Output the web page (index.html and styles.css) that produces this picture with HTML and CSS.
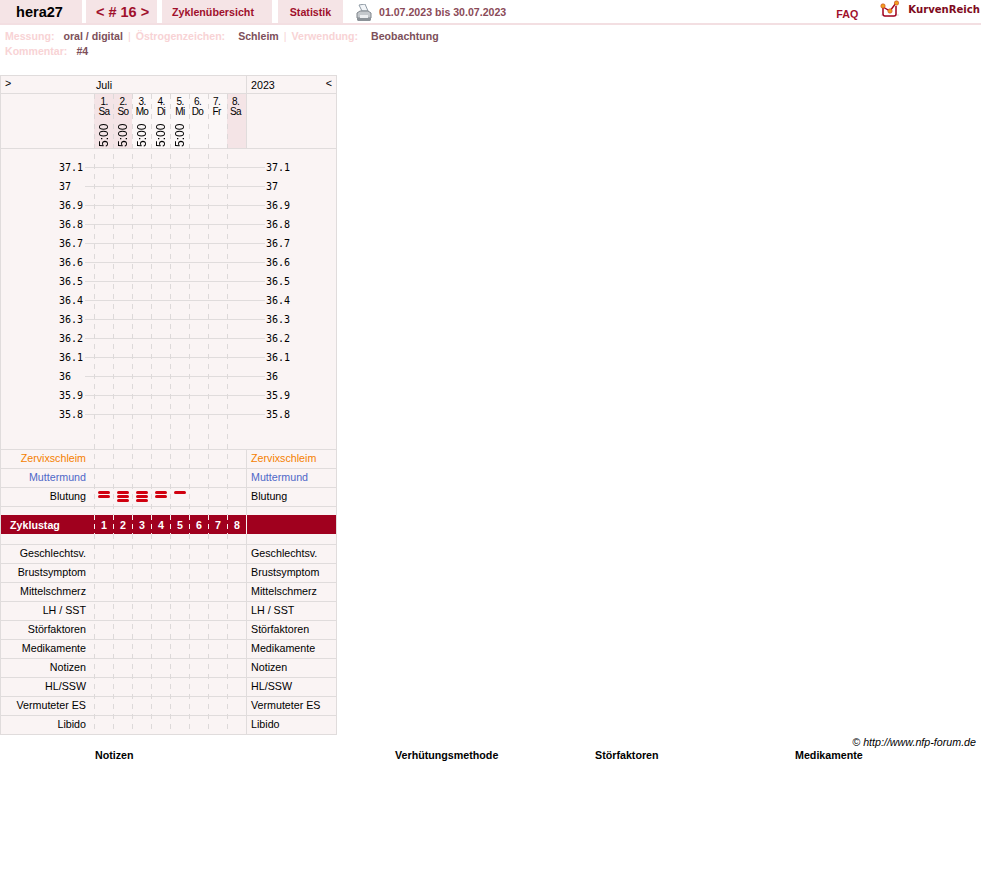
FILE: index.html
```html
<!DOCTYPE html>
<html lang="de">
<head>
    <meta charset="UTF-8">
    <title>Zyklus 16</title>
    <link rel="stylesheet" href="styles.css">
</head>
<body>

<header class="topbar">
    <div class="tab tab-user">hera27</div>
    <div class="tab tab-cycle">&lt; # 16 &gt;</div>
    <div class="tab tab-overview">Zyklenübersicht</div>
    <div class="tab tab-stats">Statistik</div>
    <svg class="printer" width="16" height="18" viewBox="0 0 16 18">
        <path d="M3 1l6-1 3 7H6z" fill="#f2f5f8" stroke="#8f9aa4" stroke-width="1"/>
        <path d="M1 9l3-2h8l3 2v5H1z" fill="#c4c8cc" stroke="#80868c" stroke-width="1"/>
        <path d="M1 14h14v2l-1 1H2l-1-1z" fill="#8c9298"/>
        <path d="M4 11h8v3H4z" fill="#eceef0"/>
    </svg>
    <div class="dates">01.07.2023 bis 30.07.2023</div>
    <div class="faq">FAQ</div>
    <svg class="logo" width="20" height="18" viewBox="0 0 20 18">
        <path d="M1 15h18M5 17v-2M9 17v-2M13 17v-2" fill="none" stroke="#d8d8d8" stroke-width="1"/>
        <path d="M3 7v7q0 2 2 2h9q2 0 2-2V6" fill="#fff" stroke="#a0001e" stroke-width="1.5"/>
        <path d="M3 7l7 4 6-8" fill="none" stroke="#a0001e" stroke-width="1.4"/>
        <circle cx="3" cy="6" r="2.2" fill="#f0a020" stroke="#c8401c" stroke-width="0.6"/>
        <circle cx="10" cy="11" r="2.2" fill="#f0a020" stroke="#c8401c" stroke-width="0.6"/>
        <circle cx="16.500" cy="3" r="2.2" fill="#f0a020" stroke="#c8401c" stroke-width="0.6"/>
    </svg>
    <div class="brand">KurvenReich</div>
</header>

<div class="meta">
    <div class="meta-line">
        <span class="key">Messung:</span><span class="val">oral / digital</span><span class="sep">|</span>
        <span class="key key-wide">Östrogenzeichen:</span><span class="val">Schleim</span><span class="sep">|</span>
        <span class="key key-wide">Verwendung:</span><span class="val">Beobachtung</span>
    </div>
    <div class="meta-line">
        <span class="key">Kommentar:</span><span class="val">#4</span>
    </div>
</div>

<div class="chart" id="chart"></div>

<div class="copyright">© http://www.nfp-forum.de</div>

<div class="notes">
    <div class="note-col note-wide">Notizen</div>
    <div class="note-col">Verhütungsmethode</div>
    <div class="note-col">Störfaktoren</div>
    <div class="note-col">Medikamente</div>
</div>

<script>
    const days = [
        ['1.', 'Sa', '5:00'], ['2.', 'So', '5:00'], ['3.', 'Mo', '5:00'], ['4.', 'Di', '5:00'],
        ['5.', 'Mi', '5:00'], ['6.', 'Do', ''], ['7.', 'Fr', ''], ['8.', 'Sa', '']
    ];
    const temps = ['37.1', '37', '36.9', '36.8', '36.7', '36.6', '36.5', '36.4', '36.3', '36.2', '36.1', '36', '35.9', '35.8'];
    const bleeding = [2, 3, 3, 2, 1, 0, 0, 0];
    const lower = ['Geschlechtsv.', 'Brustsymptom', 'Mittelschmerz', 'LH / SST', 'Störfaktoren', 'Medikamente', 'Notizen', 'HL/SSW', 'Vermuteter ES', 'Libido'];

    function labelRow(name, cls, inner) {
        return `<div class="row ${cls}">
            <div class="left">${name}</div>
            <div class="days">${inner || ''}</div>
            <div class="right">${name}</div>
        </div>`;
    }

    let html = '<div class="grid-lines"></div>';

    html += `<div class="row head-row">
        <div class="left head-left"><span>&gt;</span></div>
        <div class="days">Juli</div>
        <div class="right head-right"><span>2023</span><span>&lt;</span></div>
    </div>`;

    html += '<div class="row day-row"><div class="left"></div><div class="days">';
    days.forEach(d => {
        const weekend = d[1] === 'Sa' || d[1] === 'So' ? ' weekend' : '';
        html += `<div class="day${weekend}"><div class="day-name">${d[0]}<br>${d[1]}</div><div class="day-time">${d[2]}</div></div>`;
    });
    html += '</div><div class="right"></div></div>';

    html += '<div class="temps">';
    temps.forEach(t => {
        html += `<div class="temp-row"><div class="temp-left">${t}</div><div class="temp-right">${t}</div></div>`;
    });
    html += '</div>';

    html += labelRow('Zervixschleim', 'orange');
    html += labelRow('Muttermund', 'blue');

    let marks = '';
    bleeding.forEach(n => {
        marks += '<div class="mark">' + '<i></i>'.repeat(n) + '</div>';
    });
    html += labelRow('Blutung', '', marks);

    html += '<div class="row spacer-a"><div class="left"></div><div class="days"></div><div class="right"></div></div>';

    let nums = '';
    days.forEach((d, i) => { nums += `<div class="num">${i + 1}</div>`; });
    html += `<div class="row red-row"><div class="left">Zyklustag</div><div class="days">${nums}</div><div class="right"></div></div>`;

    html += '<div class="row spacer-b"><div class="left"></div><div class="days"></div><div class="right"></div></div>';

    lower.forEach(name => { html += labelRow(name, ''); });

    document.getElementById('chart').innerHTML = html;
</script>

</body>
</html>
```

FILE: styles.css
```css
body {
    font-family: "Liberation Sans", Arial, sans-serif;
    font-size: 10.7px;
    margin: 0;
    background-color: #fff;
    color: #000;
}
.topbar {
    display: flex;
    align-items: center;
    height: 23px;
    border-bottom: 2px solid #f3dfe2;
}
.tab {
    height: 23px;
    line-height: 24px;
    background-color: #f5e4e6;
    color: #a0102c;
    font-weight: bold;
    text-align: center;
    box-sizing: border-box;
}
.tab-user {
    width: 82px;
    margin-right: 4px;
    padding-right: 3px;
    color: #000;
    font-size: 14.5px;
}
.tab-cycle {
    width: 71px;
    margin-right: 5px;
    padding-left: 2px;
    font-size: 14.5px;
}
.tab-overview {
    width: 110px;
    margin-right: 6px;
    text-align: left;
    padding-left: 10px;
}
.tab-stats {
    width: 65px;
    margin-right: 13px;
}
.printer {
    flex: none;
    margin-right: 7px;
    margin-top: 2px;
}
.dates {
    color: #8a4a58;
    font-weight: bold;
    font-size: 10.6px;
}
.faq {
    margin-left: auto;
    margin-top: 5px;
    margin-right: 22px;
    color: #a0102c;
    font-weight: bold;
}
.logo {
    flex: none;
    margin-right: 8px;
    margin-top: -5px;
}
.brand {
    font-family: "DejaVu Sans", sans-serif;
    font-weight: bold;
    font-size: 10.1px;
    color: #7e0a20;
    margin-right: 1px;
    margin-top: -4px;
}
.meta {
    padding: 4px 5px 0;
    font-size: 10.6px;
    font-weight: bold;
    line-height: 15px;
    height: 46px;
}
.meta-line {
    display: flex;
    white-space: pre;
}
.key {
    color: #f8d3d5;
    margin-right: 9px;
}
.key-wide {
    margin-right: 13px;
}
.val {
    color: #7d4f5a;
}
.sep {
    color: #f8d3d5;
    font-weight: normal;
    margin: 0 5px;
}
.chart {
    position: relative;
    width: 337px;
    height: 660px;
    box-sizing: border-box;
    border: 1px solid #e0dcdc;
    background-color: #faf4f4;
}
.grid-lines {
    position: absolute;
    left: 93px;
    top: 18px;
    bottom: 0;
    width: 134px;
    background-image: repeating-linear-gradient(to bottom, #ddd9d9 0 5px, transparent 5px 10px);
    mask-image: repeating-linear-gradient(to right, #000 0 1px, transparent 1px 19px);
    z-index: 1;
}
.row {
    display: flex;
    height: 19px;
    line-height: 17px;
    box-sizing: border-box;
    border-bottom: 1px solid #e0dcdc;
}
.left {
    width: 93px;
    box-sizing: border-box;
    padding-right: 8px;
    text-align: right;
    flex: none;
}
.days {
    display: flex;
    width: 152px;
    flex: none;
}
.right {
    flex: 1;
    box-sizing: border-box;
    border-left: 1px solid #e0dcdc;
    padding-left: 4px;
}
.head-row {
    height: 18px;
    line-height: 18px;
}
.head-left {
    text-align: left;
    padding-left: 4px;
    line-height: 15px;
}
.head-row .days {
    padding-left: 2px;
    box-sizing: border-box;
}
.head-right {
    display: flex;
    justify-content: space-between;
    padding-right: 4px;
}
.head-right span:last-child {
    line-height: 15px;
}
.day-row {
    height: 55px;
    line-height: 10px;
}
.day {
    width: 19px;
    text-align: center;
    font-size: 10px;
    letter-spacing: -0.6px;
    padding-top: 3px;
    box-sizing: border-box;
    background-color: #fbf7f7;
}
.day:nth-child(-n+5) {
    padding-left: 1px;
}
.day:nth-child(n+6) {
    padding-right: 2px;
}
.day.weekend {
    background-color: #f4e4e6;
}
.day-name {
    height: 25px;
}
.day-time {
    writing-mode: vertical-rl;
    transform: rotate(180deg);
    height: 26px;
    width: 19px;
    line-height: 19px;
    font-size: 12px;
    letter-spacing: 0;
}
.temps {
    height: 301px;
    box-sizing: border-box;
    padding-top: 9px;
    border-bottom: 1px solid #e0dcdc;
    font-family: "DejaVu Sans Mono", monospace;
    font-size: 10px;
}
.temp-row {
    position: relative;
    display: flex;
    height: 19px;
    line-height: 19px;
}
.temp-row::after {
    content: "";
    position: absolute;
    left: 84px;
    width: 180px;
    top: 9px;
    height: 1px;
    background-color: #e0dcdc;
}
.temp-left {
    flex: none;
    width: 265px;
    box-sizing: border-box;
    padding-left: 58px;
}
.orange {
    color: #f57f00;
}
.blue {
    color: #4f68c8;
}
.mark {
    display: flex;
    flex-direction: column;
    align-items: center;
    gap: 1px;
    width: 19px;
    padding-top: 3px;
    box-sizing: border-box;
}
.mark i {
    display: block;
    width: 12px;
    height: 3px;
    border-radius: 1.5px;
    background-color: #d0000f;
}
.spacer-a {
    height: 8px;
    border-bottom: none;
}
.red-row {
    position: relative;
    z-index: 2;
    background-color: #a0001e;
    color: #fff;
    font-weight: bold;
    border-bottom: none;
    line-height: 20px;
}
.red-row .left {
    text-align: left;
    padding-left: 9px;
}
.red-row .right {
    border-left: 1px solid #f9f4f4;
}
.num {
    width: 19px;
    padding-left: 1px;
    box-sizing: border-box;
    text-align: center;
    background-image: repeating-linear-gradient(to bottom, #f9eeee 0 5px, transparent 5px 9px);
    background-size: 1px 100%;
    background-repeat: no-repeat;
}
.spacer-b {
    height: 11px;
}
.copyright {
    text-align: right;
    font-style: italic;
    padding-right: 5px;
    line-height: 13px;
    margin-top: 1px;
}
.notes {
    display: flex;
    padding-left: 95px;
    font-weight: bold;
    line-height: 13px;
}
.note-col {
    width: 200px;
    flex: none;
}
.note-wide {
    width: 300px;
}
```
